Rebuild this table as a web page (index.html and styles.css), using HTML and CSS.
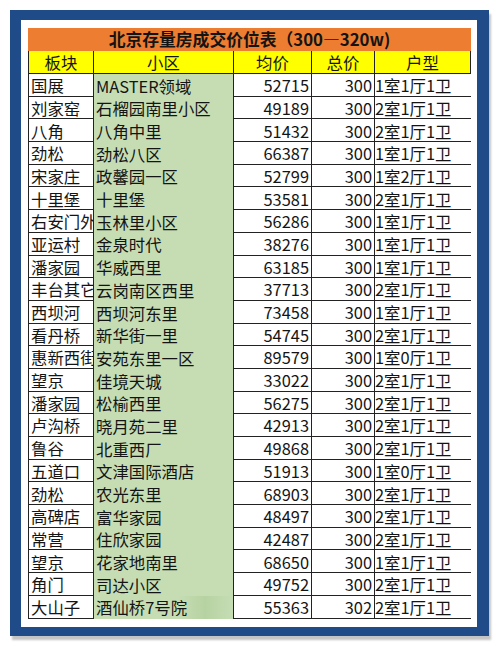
FILE: index.html
```html
<!DOCTYPE html>
<html lang="zh-CN">
<head>
<meta charset="utf-8">
<title>北京存量房成交价位表</title>
<link rel="stylesheet" href="styles.css">
</head>
<body>
<div class="frame">
  <div class="sheet">
    <div class="table">
      <div class="title">北京存量房成交价位表（300—320w)</div>
      <div class="c h first">板块</div><div class="c h">小区</div><div class="c h">均价</div><div class="c h">总价</div><div class="c h">户型</div>

      <div class="c a first">国展</div><div class="c g">MASTER领域</div><div class="c n">52715</div><div class="c n">300</div><div class="c t">1室1厅1卫</div>
      <div class="c a first">刘家窑</div><div class="c g">石榴园南里小区</div><div class="c n">49189</div><div class="c n">300</div><div class="c t">2室1厅1卫</div>
      <div class="c a first">八角</div><div class="c g">八角中里</div><div class="c n">51432</div><div class="c n">300</div><div class="c t">2室1厅1卫</div>
      <div class="c a first">劲松</div><div class="c g">劲松八区</div><div class="c n">66387</div><div class="c n">300</div><div class="c t">1室1厅1卫</div>
      <div class="c a first">宋家庄</div><div class="c g">政馨园一区</div><div class="c n">52799</div><div class="c n">300</div><div class="c t">1室2厅1卫</div>
      <div class="c a first">十里堡</div><div class="c g">十里堡</div><div class="c n">53581</div><div class="c n">300</div><div class="c t">2室1厅1卫</div>
      <div class="c a first">右安门外</div><div class="c g">玉林里小区</div><div class="c n">56286</div><div class="c n">300</div><div class="c t">1室1厅1卫</div>
      <div class="c a first">亚运村</div><div class="c g">金泉时代</div><div class="c n">38276</div><div class="c n">300</div><div class="c t">1室1厅1卫</div>
      <div class="c a first">潘家园</div><div class="c g">华威西里</div><div class="c n">63185</div><div class="c n">300</div><div class="c t">1室1厅1卫</div>
      <div class="c a first">丰台其它</div><div class="c g">云岗南区西里</div><div class="c n">37713</div><div class="c n">300</div><div class="c t">2室1厅1卫</div>
      <div class="c a first">西坝河</div><div class="c g">西坝河东里</div><div class="c n">73458</div><div class="c n">300</div><div class="c t">1室1厅1卫</div>
      <div class="c a first">看丹桥</div><div class="c g">新华街一里</div><div class="c n">54745</div><div class="c n">300</div><div class="c t">2室1厅1卫</div>
      <div class="c a first">惠新西街</div><div class="c g">安苑东里一区</div><div class="c n">89579</div><div class="c n">300</div><div class="c t">1室0厅1卫</div>
      <div class="c a first">望京</div><div class="c g">佳境天城</div><div class="c n">33022</div><div class="c n">300</div><div class="c t">2室1厅1卫</div>
      <div class="c a first">潘家园</div><div class="c g">松榆西里</div><div class="c n">56275</div><div class="c n">300</div><div class="c t">2室1厅1卫</div>
      <div class="c a first">卢沟桥</div><div class="c g">晓月苑二里</div><div class="c n">42913</div><div class="c n">300</div><div class="c t">2室1厅1卫</div>
      <div class="c a first">鲁谷</div><div class="c g">北重西厂</div><div class="c n">49868</div><div class="c n">300</div><div class="c t">2室1厅1卫</div>
      <div class="c a first">五道口</div><div class="c g">文津国际酒店</div><div class="c n">51913</div><div class="c n">300</div><div class="c t">1室0厅1卫</div>
      <div class="c a first">劲松</div><div class="c g">农光东里</div><div class="c n">68903</div><div class="c n">300</div><div class="c t">2室1厅1卫</div>
      <div class="c a first">高碑店</div><div class="c g">富华家园</div><div class="c n">48497</div><div class="c n">300</div><div class="c t">2室1厅1卫</div>
      <div class="c a first">常营</div><div class="c g">住欣家园</div><div class="c n">42487</div><div class="c n">300</div><div class="c t">2室1厅1卫</div>
      <div class="c a first">望京</div><div class="c g">花家地南里</div><div class="c n">68650</div><div class="c n">300</div><div class="c t">1室1厅1卫</div>
      <div class="c a first">角门</div><div class="c g">司达小区</div><div class="c n">49752</div><div class="c n">300</div><div class="c t">2室1厅1卫</div>
      <div class="c a first">大山子</div><div class="c g last">酒仙桥7号院</div><div class="c n">55363</div><div class="c n">302</div><div class="c t">2室1厅1卫</div>
    </div>
  </div>
</div>
</body>
</html>
```

FILE: styles.css
```css
html, body {
  margin: 0;
  padding: 0;
  background: #ffffff;
}

body {
  font-family: "Noto Sans CJK SC", "Noto Sans", sans-serif;
  color: #141414;
  width: 500px;
  height: 651px;
  overflow: hidden;
}

.frame {
  margin: 10px 0 0 10px;
  width: 479px;
  height: 626px;
  box-sizing: border-box;
  background: #1f4b88;
  padding: 10px 12px 9px 11px;
  box-shadow: 2px 4px 2px #c4c4c4;
}

.sheet {
  background: #ffffff;
  height: 100%;
  box-sizing: border-box;
  padding: 8px 6px 0 8px;
}

.table {
  display: grid;
  grid-template-columns: 65px 140px 78px 63px 96px;
  grid-template-rows: 23px 23px;
  grid-auto-rows: 22.7px;
  font-size: 16.4px;
  line-height: 1;
}

.title {
  grid-column: 1 / -1;
  background: #ed7d31;
  font-weight: bold;
  font-size: 16.8px;
  display: flex;
  align-items: center;
  justify-content: center;
  margin-left: -1px;
}

.c {
  box-sizing: border-box;
  border-right: 1px solid #222;
  border-bottom: 1px solid #222;
  white-space: nowrap;
  overflow: hidden;
  display: flex;
  align-items: center;
  padding-top: 1px;
}

.first {
  border-left: 1px solid #222;
  margin-left: -1px;
}

.h {
  background: #ffff00;
  justify-content: center;
}

.a {
  padding-left: 2px;
}

.g {
  background: #c6ddb4;
  border-bottom: none;
  padding-left: 2px;
}

.g.last {
  background: linear-gradient(90deg, #c6ddb4 0%, #c6ddb4 60%, #b7d2a2 80%, #c6ddb4 100%);
}

.n {
  justify-content: flex-end;
  padding-right: 2px;
}

.t {
  padding-left: 0;
  border-right: none;
}
```
